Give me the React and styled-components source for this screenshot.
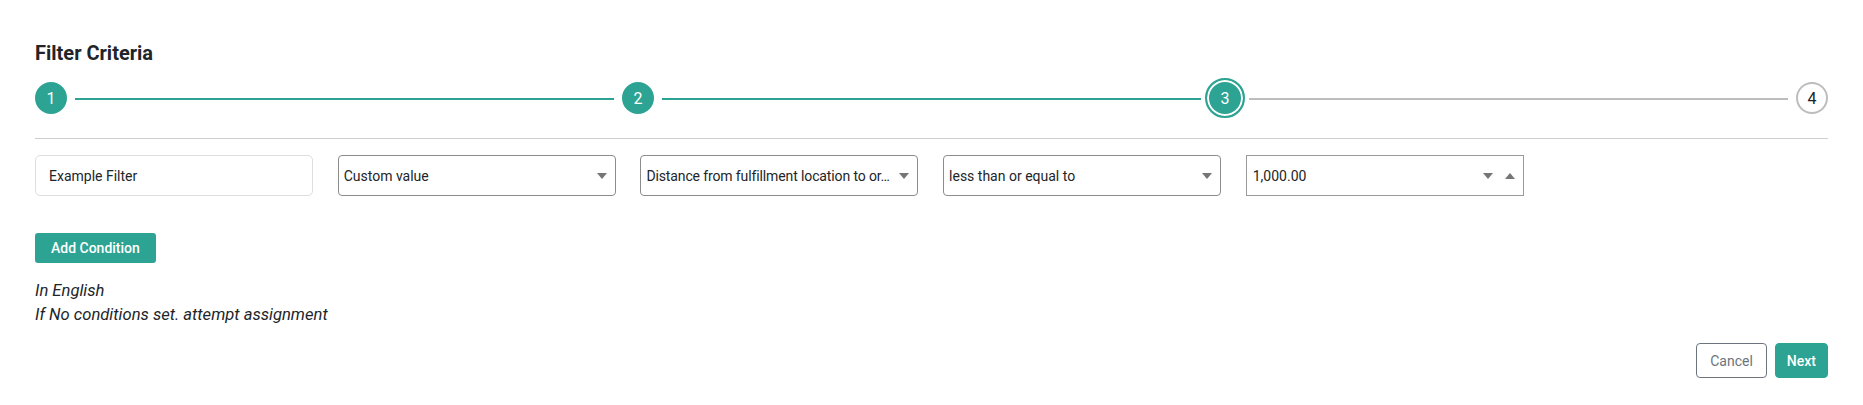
import React from 'react'
import styled, { createGlobalStyle } from 'styled-components'

const teal = '#2ca393'

const GlobalStyle = createGlobalStyle`
    body {
        margin: 0;
        background: #fff;
        font-family: Roboto, "Liberation Sans", sans-serif;
        color: #212529;
    }
`

const Page = styled.div`
    padding: 42px 35px 0 35px;
`

const Title = styled.h2`
    margin: 0;
    font-size: 20px;
    line-height: 23px;
    font-weight: 700;
    color: #212529;
`

const Stepper = styled.div`
    display: flex;
    align-items: center;
    height: 40px;
    margin-top: 13px;
`

const Circle = styled.div`
    flex: none;
    box-sizing: border-box;
    width: ${({ $active }) => ($active ? '40px' : '32px')};
    height: ${({ $active }) => ($active ? '40px' : '32px')};
    margin: ${({ $active }) => ($active ? '0 -4px' : '0')};
    border-radius: 50%;
    display: flex;
    align-items: center;
    justify-content: center;
    font-size: 16px;
    background: ${({ $done }) => ($done ? teal : '#fff')};
    color: ${({ $done }) => ($done ? '#fff' : '#222')};
    border: 2px solid ${({ $done }) => ($done ? teal : '#bdbdbd')};
    box-shadow: ${({ $active }) => ($active ? 'inset 0 0 0 2px #fff' : 'none')};
`

const Line = styled.div`
    flex: 1;
    height: 2px;
    margin: 1px 8px 0;
    background: ${({ $done }) => ($done ? teal : '#bdbdbd')};
`

const Divider = styled.hr`
    margin: 20px 0 0;
    border: none;
    border-top: 1px solid #cfcfcf;
`

const Fields = styled.div`
    display: flex;
    gap: 24.7px;
    margin-top: 16px;
`

const TextInput = styled.div`
    box-sizing: border-box;
    width: 278px;
    height: 41px;
    display: flex;
    align-items: center;
    padding-left: 13px;
    border: 1px solid #dedede;
    border-radius: 5px;
    font-size: 14px;
    color: #212529;
`

const Select = styled.div`
    box-sizing: border-box;
    width: 278px;
    height: 41px;
    display: flex;
    align-items: center;
    gap: 5px;
    padding: 0 8px 0 ${({ $square }) => ($square ? '6px' : '5px')};
    border: 1px solid ${({ $square }) => ($square ? '#9a9a9a' : '#8c8c8c')};
    border-radius: ${({ $square }) => ($square ? '0' : '4px')};
    font-size: 14px;
    color: #212529;
`

const Value = styled.span`
    flex: 1;
    min-width: 0;
    white-space: nowrap;
    letter-spacing: ${({ $tight }) => ($tight ? '-0.12px' : 'normal')};
`

const Caret = styled.span`
    flex: none;
    width: 0;
    height: 0;
    border-left: 5.5px solid transparent;
    border-right: 5.5px solid transparent;
    ${({ $up }) => ($up ? 'border-bottom' : 'border-top')}: 6px solid #757575;
    margin-left: ${({ $up }) => ($up ? '7px' : '0')};
`

const AddButton = styled.button`
    margin-top: 37px;
    height: 30px;
    padding: 0 16px;
    border: none;
    border-radius: 3px;
    background: ${teal};
    color: #fff;
    font-family: inherit;
    font-size: 14px;
    font-weight: 500;
`

const Notes = styled.div`
    margin-top: 16px;
    font-size: 16.6px;
    line-height: 24px;
    font-style: italic;
    color: #212529;
`

const Footer = styled.div`
    display: flex;
    justify-content: flex-end;
    gap: 8px;
    margin-top: 16px;
`

const FooterButton = styled.button`
    height: 35px;
    padding: 0 ${({ $primary }) => ($primary ? '11px' : '13px')};
    border-radius: 4px;
    border: 1px solid ${({ $primary }) => ($primary ? teal : '#6c757d')};
    background: ${({ $primary }) => ($primary ? teal : '#fff')};
    color: ${({ $primary }) => ($primary ? '#fff' : '#6c757d')};
    font-family: inherit;
    font-size: 14px;
    font-weight: ${({ $primary }) => ($primary ? 500 : 400)};
`

const steps = [
    { n: 1, done: true },
    { n: 2, done: true },
    { n: 3, done: true, active: true },
    { n: 4, done: false },
]

const App = () => {
    return (
        <Page>
            <GlobalStyle />
            <Title>Filter Criteria</Title>
            <Stepper>
                {steps.map((s, i) => (
                    <React.Fragment key={s.n}>
                        {i > 0 && <Line $done={s.done} />}
                        <Circle $done={s.done} $active={s.active}>{s.n}</Circle>
                    </React.Fragment>
                ))}
            </Stepper>
            <Divider />
            <Fields>
                <TextInput>Example Filter</TextInput>
                <Select>
                    <Value>Custom value</Value>
                    <Caret />
                </Select>
                <Select>
                    <Value $tight>Distance from fulfillment location to or…</Value>
                    <Caret />
                </Select>
                <Select>
                    <Value>less than or equal to</Value>
                    <Caret />
                </Select>
                <Select $square>
                    <Value>1,000.00</Value>
                    <Caret />
                    <Caret $up />
                </Select>
            </Fields>
            <AddButton>Add Condition</AddButton>
            <Notes>
                <div>In English</div>
                <div>If No conditions set. attempt assignment</div>
            </Notes>
            <Footer>
                <FooterButton>Cancel</FooterButton>
                <FooterButton $primary>Next</FooterButton>
            </Footer>
        </Page>
    )
}

export default App
